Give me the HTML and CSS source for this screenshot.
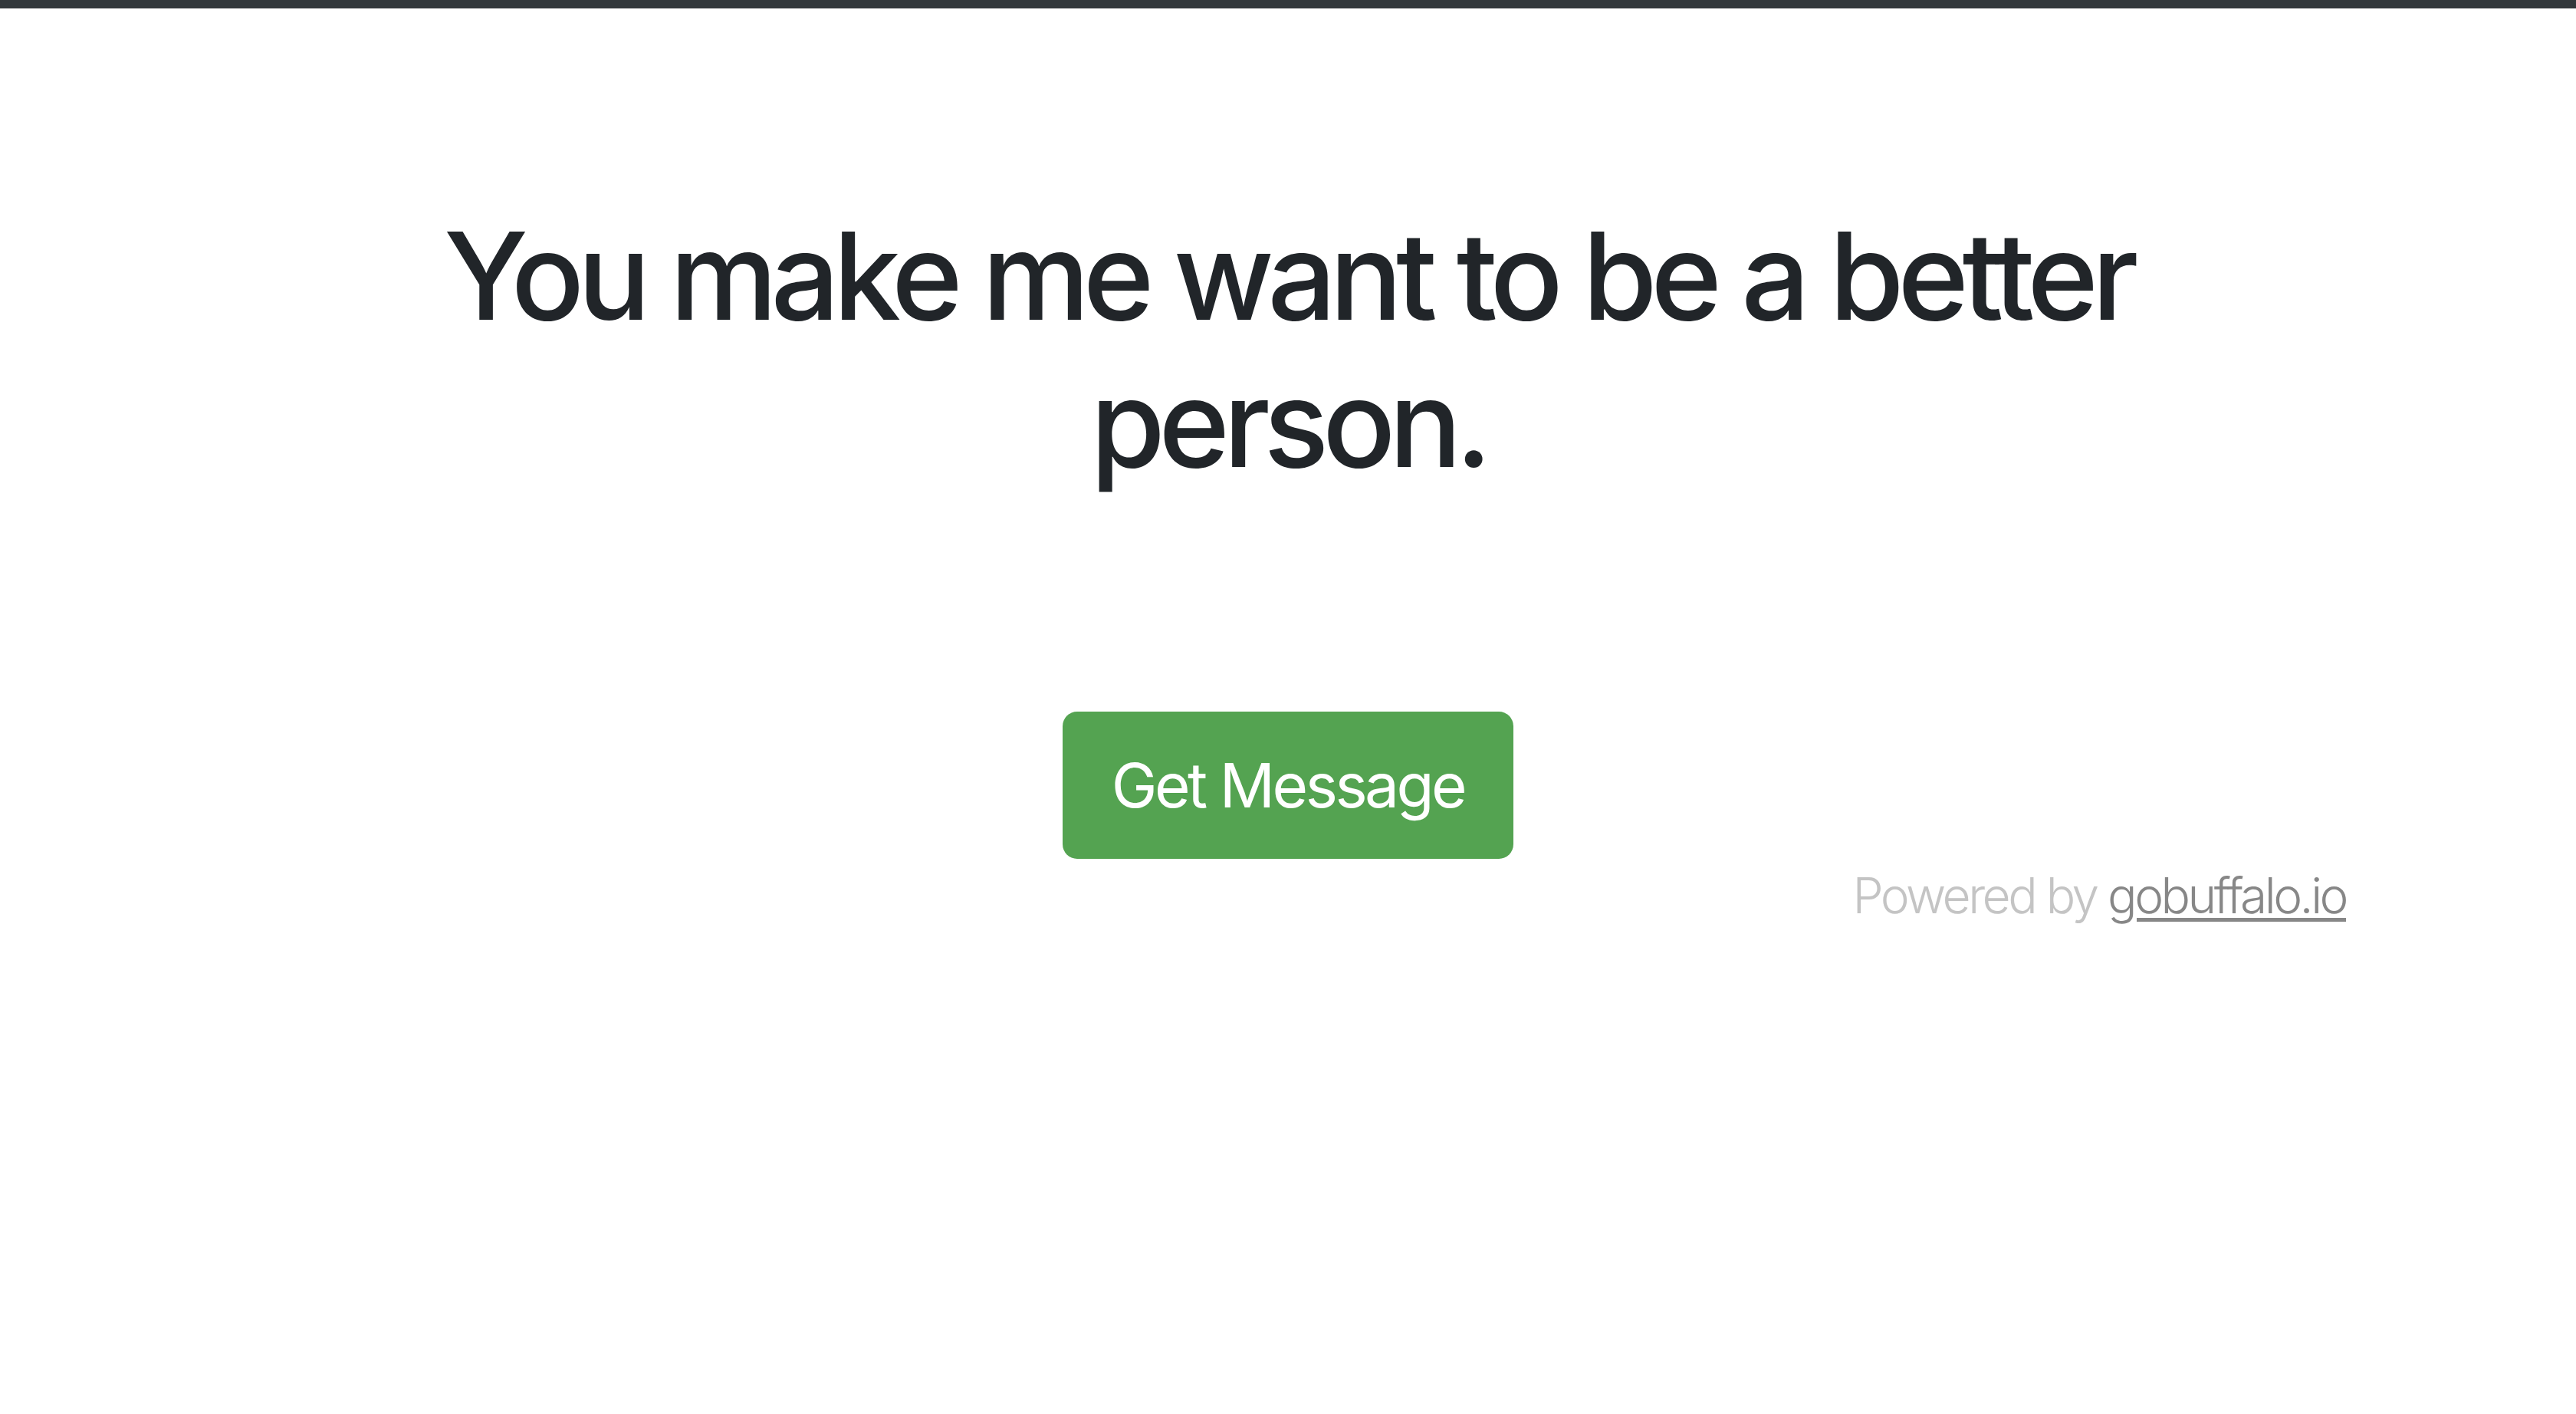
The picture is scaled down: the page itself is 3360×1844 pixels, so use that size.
FILE: index.html
```html
<!DOCTYPE html>
<html lang="en">
<head>
<meta charset="utf-8">
<title>Buffalo</title>
<link rel="stylesheet" href="styles.css">
</head>
<body>
<div class="topbar"></div>
<div class="container">
  <h1 class="message">You make me want to be a better person.</h1>
  <div class="actions">
    <button class="btn" type="button">Get Message</button>
  </div>
  <footer class="footer">
    <span class="powered">Powered by</span> <a class="link" href="#">gobuffalo.io</a>
  </footer>
</div>
</body>
</html>
```
FILE: styles.css
```css
html, body {
  margin: 0;
  padding: 0;
  background: #ffffff;
}
body {
  font-family: Inter, "Noto Sans", "Liberation Sans", sans-serif;
  font-feature-settings: "calt" 0, "liga" 0;
  font-variant-ligatures: none;
  color: #212529;
  height: 1844px;
  overflow: hidden;
}
.topbar {
  height: 11px;
  background: #33383c;
}
.container {
  width: 2880px;
  margin: 0 auto;
  padding: 253px 60px 0;
  box-sizing: border-box;
}
.message {
  margin: 0 auto;
  max-width: 2500px;
  text-align: center;
  font-size: 158px;
  line-height: 192px;
  font-weight: 500;
  letter-spacing: -8.5px;
  word-spacing: 0;
  color: #212529;
}
.actions {
  margin-top: 280px;
  display: flex;
  justify-content: center;
}
.btn {
  font-family: inherit;
  font-feature-settings: "calt" 0, "liga" 0;
  font-size: 80px;
  line-height: 122px;
  font-weight: 400;
  letter-spacing: -3.5px;
  white-space: nowrap;
  color: #ffffff;
  background: #54a351;
  border: 0;
  border-radius: 19px;
  padding: 35px 0;
  width: 588px;
  text-align: center;
}
.footer {
  text-align: right;
  font-size: 64px;
  line-height: 96px;
  font-weight: 300;
  letter-spacing: -3.5px;
}
.powered {
  color: #c4c4c4;
}
.link {
  color: #878787;
  text-decoration: underline;
  text-decoration-thickness: 5px;
  text-underline-offset: 6px;
}
```
